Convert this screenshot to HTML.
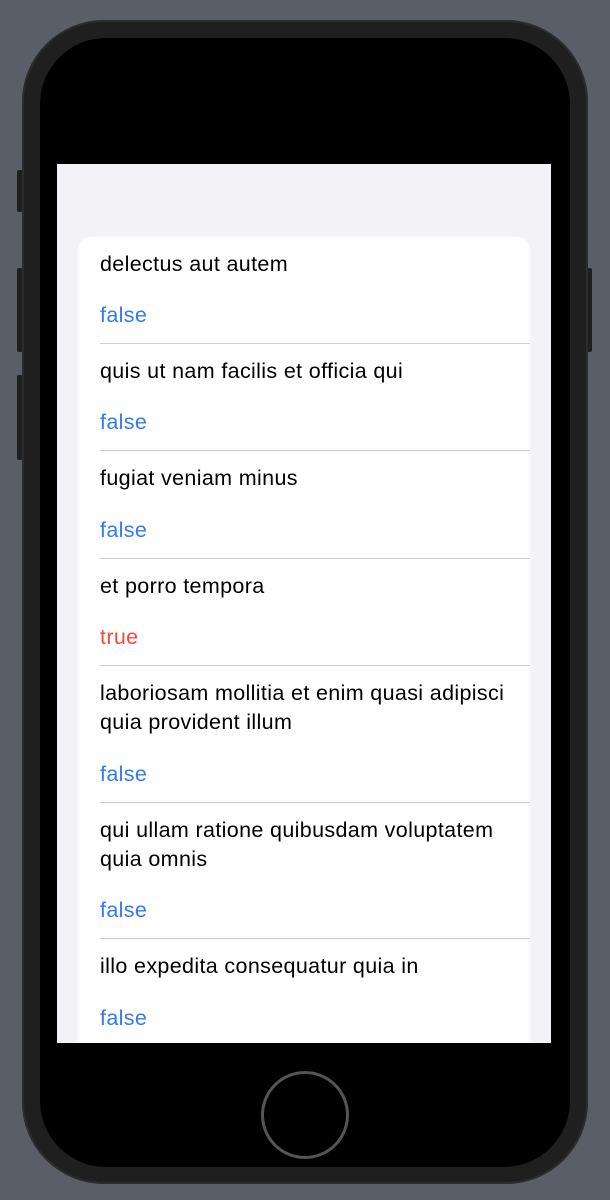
<!DOCTYPE html>
<html><head><style>
body{margin:0;width:610px;height:1200px;background:#5a5f67;position:relative;overflow:hidden;font-family:"Liberation Sans",sans-serif}
.phone{position:absolute;left:22px;top:20px;width:566px;height:1164px;background:#1f1f1f;border-radius:82px;box-shadow:inset 0 0 0 2px #2c2c2c}
.inner{position:absolute;left:40px;top:38px;width:530px;height:1129px;background:#000;border-radius:66px}
.btn{position:absolute;background:#1f1f1f;width:6px;border-radius:2px}
.screen{position:absolute;left:57px;top:164px;width:494px;height:879px;background:#f2f2f7;overflow:hidden}
.card{position:absolute;left:21px;top:73px;width:452px;height:900px;background:#fff;border-radius:12px}
.t{position:absolute;left:22px;font-size:21.5px;letter-spacing:0.35px;color:#000;line-height:29px;white-space:nowrap}
.v{position:absolute;left:22px;font-size:21.5px;letter-spacing:0.35px;line-height:29px;color:#3478f6}
.r{color:#eb4d3d}
.sep{position:absolute;left:22px;right:0;height:1px;background:#d0d0d4}
.home{position:absolute;left:261px;top:1071px;border:3px solid #555;border-radius:50%;box-sizing:border-box;width:88px;height:88px}
</style></head><body>
<div class="btn" style="left:17px;top:170px;height:42px"></div>
<div class="btn" style="left:17px;top:268px;height:84px"></div>
<div class="btn" style="left:17px;top:375px;height:85px"></div>
<div class="btn" style="left:586px;top:268px;height:84px"></div>
<div class="phone"></div>
<div class="inner"></div>
<div class="screen">
<div class="card">
<div class="t" style="top:13px">delectus aut autem</div>
<div class="v" style="top:64px">false</div>
<div class="sep" style="top:106px"></div>
<div class="t" style="top:120px">quis ut nam facilis et officia qui</div>
<div class="v" style="top:171px">false</div>
<div class="sep" style="top:213px"></div>
<div class="t" style="top:227px">fugiat veniam minus</div>
<div class="v" style="top:279px">false</div>
<div class="sep" style="top:321px"></div>
<div class="t" style="top:335px">et porro tempora</div>
<div class="v r" style="top:386px">true</div>
<div class="sep" style="top:428px"></div>
<div class="t" style="top:442px">laboriosam mollitia et enim quasi adipisci<br>quia provident illum</div>
<div class="v" style="top:523px">false</div>
<div class="sep" style="top:565px"></div>
<div class="t" style="top:579px">qui ullam ratione quibusdam voluptatem<br>quia omnis</div>
<div class="v" style="top:659px">false</div>
<div class="sep" style="top:701px"></div>
<div class="t" style="top:715px">illo expedita consequatur quia in</div>
<div class="v" style="top:767px">false</div>
</div>
</div>
<div class="home"></div>
</body></html>
